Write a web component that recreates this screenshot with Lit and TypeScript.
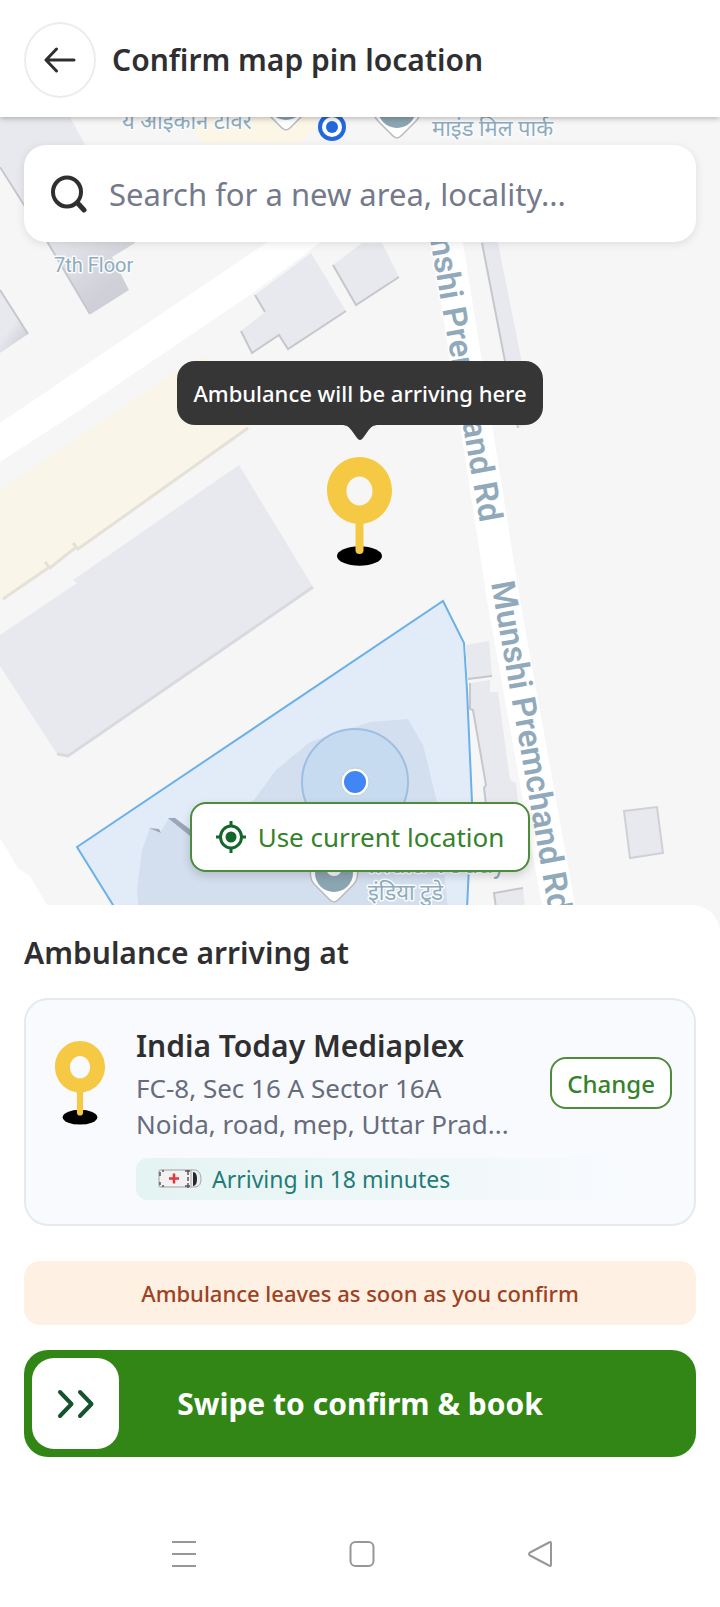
import { LitElement, html, css, svg } from "lit";
import { customElement, property } from "lit/decorators.js";

@customElement("location-pin")
class LocationPin extends LitElement {
  static styles = css`
    :host { display: block; }
    svg { display: block; width: 100%; height: auto; }
  `;
  render() {
    return html`<svg viewBox="0 0 65 109" aria-hidden="true">
      <ellipse cx="32.5" cy="99" rx="22.5" ry="9.7" fill="#000"/>
      <path d="M32.5 60V93" stroke="#f6c944" stroke-width="8" stroke-linecap="round"/>
      <path fill="#f6c944" fill-rule="evenodd" d="M32.5 0C50.5 0 65 15 65 33.5S50.5 67 32.5 67 0 52 0 33.5 14.5 0 32.5 0Zm0 19.500c-7.200 0-13 6.500-13 14.500s5.800 14.500 13 14.500 13-6.500 13-14.500-5.800-14.500-13-14.500Z"/>
    </svg>`;
  }
}

@customElement("area-map")
class AreaMap extends LitElement {
  static styles = css`
    :host { display: block; overflow: hidden; background: #f6f6f6; }
    svg { display: block; width: 100%; height: 100%; }
    .label {
      font-family: Roboto, "Noto Sans Devanagari", "Noto Sans", sans-serif;
      fill: #8fabbd; stroke: #f9fbfc; stroke-width: 3px;
      paint-order: stroke; stroke-linejoin: round;
    }
    .place { font-size: 20px; }
    .poi { font-size: 22px; }
    .poi-large { font-size: 27px; }
    .road { font-size: 33px; font-weight: 600; stroke: #fff; fill: #91aabb; }
    .building { fill: #e8e9ef; }
    .edge { fill: none; stroke: #c6c7cc; stroke-width: 2; }
    .outlined { fill: #e8e9ef; stroke: #d0d1d7; stroke-width: 2; }
  `;

  private marker(x: number, y: number) {
    return svg`<g transform="translate(${x} ${y})">
      <path d="M0 0C-3 0-5-3-8-6L-19-17C-25-23-25-34-20-40A26 26 0 0 1 20-40C25-34 25-23 19-17L8-6C5-3 3 0 0 0Z"
        fill="#fff" stroke="#b8babd" stroke-width="1.500"/>
      <circle cy="-29" r="19" fill="#8ca5b3"/>
      <circle cy="-34" r="8" fill="#f4f7f8"/>
    </g>`;
  }

  render() {
    return html`<svg viewBox="0 117 720 813" preserveAspectRatio="xMidYMin slice" role="img" aria-label="Map">
      <defs>
        <linearGradient id="shade" x1="0" y1="0" x2="0.600" y2="1">
          <stop offset="0.600" stop-color="#e8e9ef"/><stop offset="1" stop-color="#cfd0d7"/>
        </linearGradient>
      </defs>
      <path fill="#fff" d="M0 423 263 245 300 220 355 215 300 258 250 295 80 410 0 462Z"/>
      <path fill="#fff" d="M422 160H452L463 243 520 600 575 905 580 930H548L540 895 487 600 432 243Z"/>
      <path fill="#fff" d="M0 838 18 868 30 876 47 905 60 930H0Z"/>
      <path fill="url(#shade)" d="M0 117H70L84 143 135 243 112 257 129 290 91 314 0 165Z"/>
      <path class="edge" d="M0 167 48 243 90 314"/>
      <path fill="url(#shade)" d="M0 290 28 334 0 353Z"/>
      <path class="edge" d="M0 290 28 334"/>
      <path fill="#fbf6e6" d="M188 117H311L317 126 300 143H201Z"/>
      <path class="building" d="M255 295 311 253 346 311 288 349 279 335 252 353 241 331 265 312Z"/>
      <path class="edge" d="M255 295 265 312M241 331 252 353 279 335 288 349 346 311"/>
      <path class="building" d="M333 265 362 243H382L399 277 356 305Z"/>
      <path class="edge" d="M333 265 356 305 399 277"/>
      <path class="building" d="M472 160 485 160 498 243 534 422 518 428 482 243Z"/>
      <path class="edge" d="M482 243 518 428"/>
      <path fill="#f9f5e9" d="M0 490 175 372 208 355 248 428 78 549 73 543 76 548 50 568 45 562 47 567 0 600Z"/>
      <path fill="none" stroke="#e6e1d6" stroke-width="3" d="M248 428 78 549 73 543M75 548 50 568 45 562M48 568 3 599"/>
      <path class="building" d="M239 465 313 587 68 756 57 754 0 666V635L77 583 73 580Z"/>
      <path fill="none" stroke="#d9dae0" stroke-width="3" d="M313 587 68 756 57 754"/>
      <path fill="#e1ecf8" stroke="#6cb0e9" stroke-width="2" d="M77 847 443 601 464 643 467 690 472 802 466 930H128L113 905Z"/>
      <path fill="#d3dfef" d="M408 719 423 745 437 802 450 930H140L137 890 142 850 150 828 160 833 169 818 189 832 254 800 276 770 310 742 370 722Z"/>
      <path fill="#98a6b8" d="M149 828 159 829 161 833ZM168 818 175 818 195 833 190 836Z"/>
      <circle cx="355" cy="782" r="53" fill="#c6dbf0" stroke="#9dbfe4" stroke-width="2"/>
      <circle cx="355" cy="782" r="14" fill="#fff" stroke="#c3cbd8"/>
      <circle cx="355" cy="782" r="11" fill="#4285f4"/>
      <path class="building" d="M465 645 489 641 492 676 468 679Z"/>
      <path class="edge" d="M468 679 492 676"/>
      <path class="building" d="M470 683 490 680V692H498L510 780 516 783 522 840H489L484 787 487 785 473 709H470Z"/>
      <path class="edge" d="M470 683V709L473 710 486 785 484 788 489 830"/>
      <path class="building" d="M494 893 523 888 527 930H498Z"/>
      <path class="edge" d="M499 930 494 893 523 888"/>
      <path class="outlined" d="M624 811 657 807 663 853 630 858Z"/>
      <text class="label road" text-anchor="end" transform="translate(480 523) rotate(80)">Munshi Premchand Rd</text>
      <text class="label road" transform="translate(491 583) rotate(80)">Munshi Premchand Rd</text>
      <text class="label place" x="54" y="272">7th Floor</text>
      <text class="label poi" x="122" y="129">य आइकॉन टावर</text>
      <text class="label poi" x="432" y="136">माइंड मिल पार्क</text>
      <text class="label poi-large" x="368" y="873">India Today</text>
      <text class="label poi" x="368" y="900">इंडिया टुडे</text>
      ${this.marker(286, 130)}
      ${this.marker(397, 138)}
      ${this.marker(334, 902)}
      <circle cx="332" cy="127" r="14" fill="#2469dc"/>
      <circle cx="332" cy="127" r="10" fill="#fff"/>
      <circle cx="332" cy="127" r="6" fill="#2469dc"/>
    </svg>`;
  }
}

@customElement("app-root")
class AppRoot extends LitElement {
  @property() place = "India Today Mediaplex";
  @property({ type: Number }) minutes = 18;

  static styles = css`
    :host {
      display: block;
      font-family: "Noto Sans", "Open Sans", sans-serif;
      color: #2f2f31; background: #fff;
    }
    * { box-sizing: border-box; }
    h1, h2, h3, p { margin: 0; }
    button { font: inherit; color: inherit; padding: 0; cursor: pointer; }
    svg { display: block; }
    .screen { min-height: 100vh; display: flex; flex-direction: column; }
    .header {
      display: flex; align-items: center; gap: 16px;
      padding: 22px 24px 20px; height: 117px; background: #fff;
      box-shadow: 0 1px 6px rgba(0, 0, 0, 0.3); z-index: 1;
    }
    .back {
      width: 72px; height: 76px; flex: none;
      display: grid; place-items: center;
      border: 2px solid #ececee; border-radius: 50%; background: #fff;
    }
    .title { font-size: 30px; line-height: 40px; font-weight: 600; }
    .map {
      position: relative; flex: 1; min-height: 813px;
      display: flex; flex-direction: column; align-items: center;
      padding: 28px 24px 58px;
    }
    .canvas { position: absolute; inset: 0; }
    .search {
      position: relative; align-self: stretch;
      display: flex; align-items: center; gap: 22px;
      height: 97px; padding: 0 28px 0 27px;
      background: #fff; border-radius: 22px;
      box-shadow: 0 2px 10px rgba(0, 0, 0, 0.1);
    }
    .search svg { flex: none; }
    .search input {
      flex: 1; min-width: 0; border: 0; outline: 0; padding: 0;
      background: none; font: inherit; font-size: 31px; line-height: 40px; color: #2f2f31;
    }
    .search input::placeholder { color: #747a8b; opacity: 1; }
    .target {
      position: relative; margin-top: 119px;
      display: flex; flex-direction: column; align-items: center;
    }
    .tooltip {
      padding: 16px; border-radius: 18px;
      background: #363636; color: #fff;
      font-size: 22px; line-height: 32px; font-weight: 500; white-space: nowrap;
    }
    .pin { width: 65px; margin-top: 16px; }
    .locate {
      position: relative; margin-top: auto;
      display: flex; align-items: center; gap: 12px;
      height: 70px; padding: 0 24px;
      border: 2px solid #4d8c3b; border-radius: 16px; background: #fff;
      color: #34822a; font-size: 26px; white-space: nowrap;
      box-shadow: 0 4px 10px rgba(0, 0, 0, 0.15);
    }
    .panel {
      position: relative; margin-top: -25px; padding: 28px 24px 0;
      border-radius: 28px 28px 0 0; background: #fff;
      display: flex; flex-direction: column;
    }
    .heading { font-size: 30px; line-height: 40px; font-weight: 600; }
    .card {
      margin-top: 25px; padding: 26px 22px 24px 29px;
      display: grid; grid-template-columns: 50px 1fr auto; column-gap: 31px;
      border: 2px solid #e5eaef; border-radius: 24px; background: #f8fafe;
    }
    .card-pin { width: 50px; margin-top: 15px; }
    .name { font-size: 30px; line-height: 40px; font-weight: 600; }
    .address { margin-top: 4px; font-size: 26px; line-height: 36px; color: #666c7c; white-space: nowrap; }
    .details { min-width: 0; }
    .change {
      align-self: start; margin-top: 31px; height: 52px; padding: 0 15px;
      border: 2px solid #4d8c3b; border-radius: 16px; background: #fff;
      color: #34822a; font-size: 24px; font-weight: 500;
    }
    .eta {
      grid-column: 2 / -1; justify-self: stretch;
      display: flex; align-items: center; gap: 10px;
      margin-top: 16px; height: 42px; padding-left: 22px; border-radius: 12px;
      background: linear-gradient(90deg, #e4f4f2, #f8fafe 92%);
      color: #1f7c77; font-size: 23px;
    }
    .notice {
      margin-top: 35px; padding: 16px; border-radius: 16px;
      background: #fef0e3; color: #9c4223;
      text-align: center; font-size: 22px; line-height: 32px; font-weight: 500;
    }
    .swipe {
      position: relative; margin-top: 25px; height: 107px;
      border: 0; border-radius: 24px; background: #318616; color: #fff;
      font-size: 30px; font-weight: 700;
    }
    .thumb {
      position: absolute; inset: 8px auto 8px 8px; width: 87px;
      display: grid; place-items: center; border-radius: 22px; background: #fff;
    }
    .nav {
      display: flex; justify-content: center; align-items: center; gap: 152px;
      padding: 83px 0 39px 4px;
    }
    .nav button { border: 0; background: none; }
  `;

  render() {
    return html`<div class="screen">
      <header class="header">
        <button class="back" aria-label="Back">
          <svg width="32" height="28" viewBox="0 0 32 28" fill="none" stroke="#2f2f31" stroke-width="3" stroke-linecap="round" stroke-linejoin="round">
            <path d="M30 14H2.500M12.500 3 2 14 12.500 25"/>
          </svg>
        </button>
        <h1 class="title">Confirm map pin location</h1>
      </header>

      <main class="map">
        <area-map class="canvas"></area-map>
        <label class="search">
          <svg width="36" height="38" viewBox="0 0 36 38" fill="none" stroke="#2f2f31" stroke-width="4" stroke-linecap="round">
            <ellipse cx="16" cy="17" rx="14" ry="14.500"/><path d="M27 28.500 33 35" stroke-width="5"/>
          </svg>
          <input type="text" aria-label="Search location" placeholder="Search for a new area, locality...">
        </label>
        <div class="target">
          <div class="tooltip" role="tooltip">Ambulance will be arriving here</div>
          <svg width="38" height="16" viewBox="0 0 38 16" fill="#363636" aria-hidden="true">
            <path d="M0 0H38C32 0 30 2 27 6L22 13Q19 17 16 13L11 6C8 2 6 0 0 0Z"/>
          </svg>
          <location-pin class="pin"></location-pin>
        </div>
        <button class="locate">
          <svg width="30" height="32" viewBox="0 0 30 32" fill="none" stroke="#14662c" stroke-width="3" aria-hidden="true">
            <ellipse cx="15" cy="16" rx="10.500" ry="11"/><path d="M15 0V6M15 26V32M0 16H5M25 16H30"/>
            <circle cx="15" cy="16" r="5.500" fill="#14662c" stroke="none"/>
          </svg>
          <span>Use current location</span>
        </button>
      </main>

      <section class="panel">
        <h2 class="heading">Ambulance arriving at</h2>
        <article class="card">
          <location-pin class="card-pin"></location-pin>
          <div class="details">
            <h3 class="name">${this.place}</h3>
            <p class="address">FC-8, Sec 16 A Sector 16A<br>Noida, road, mep, Uttar Prad...</p>
          </div>
          <button class="change">Change</button>
          <div class="eta">
            <svg width="44" height="22" viewBox="0 0 44 22" aria-hidden="true">
              <rect x="1" y="2" width="33" height="17" rx="2" fill="#f3f1f1" stroke="#b9b9bb" stroke-width="1.500"/>
              <path d="M2 4V8M2 14V17M4 3H6M4 18H6" stroke="#55585c" stroke-width="1.500"/>
              <path d="M33 2H38Q43 4 43 11T38 19H33Z" fill="#eceeef" stroke="#a5a7aa"/>
              <path d="M35 4Q39 4 39 11T35 18Z" fill="#24272b"/>
              <path d="M30 2V7M30 9V13M30 15V20M27 3H32M27 18H32" stroke="#55585c" stroke-width="1.500"/>
              <path d="M16 5.500V15.500M11 10.500H21" stroke="#dc3a3c" stroke-width="2.500"/>
            </svg>
            <span>Arriving in ${this.minutes} minutes</span>
          </div>
        </article>
        <p class="notice">Ambulance leaves as soon as you confirm</p>
        <button class="swipe">
          <span class="thumb">
            <svg width="38" height="30" viewBox="0 0 38 30" fill="none" stroke="#14532b" stroke-width="4" stroke-linecap="round" stroke-linejoin="round" aria-hidden="true">
              <path d="M3 3 14.500 15 3 27M23 3 34.500 15 23 27"/>
            </svg>
          </span>
          Swipe to confirm &amp; book
        </button>
        <nav class="nav" aria-label="System">
          <button aria-label="Recent apps">
            <svg width="26" height="28" viewBox="0 0 26 28" stroke="#979797" stroke-width="2"><path d="M1 2H25M1 14H25M1 26H25"/></svg>
          </button>
          <button aria-label="Home">
            <svg width="26" height="28" viewBox="0 0 26 28" fill="none" stroke="#979797" stroke-width="2"><rect x="1.500" y="2" width="23" height="24" rx="5"/></svg>
          </button>
          <button aria-label="Back">
            <svg width="26" height="28" viewBox="0 0 26 28" fill="none" stroke="#979797" stroke-width="2" stroke-linejoin="round"><path d="M24 3.500V24.500Q24 27 22 25.500L3 15.500Q1 14 3 12.500L22 2.500Q24 1 24 3.500Z"/></svg>
          </button>
        </nav>
      </section>
    </div>`;
  }
}
